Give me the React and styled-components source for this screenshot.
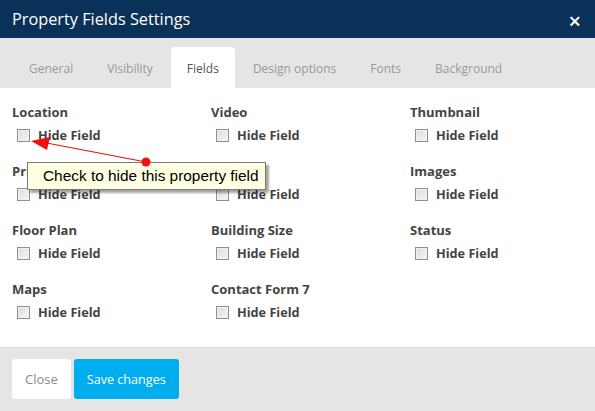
import React from "react";
import styled, { createGlobalStyle } from "styled-components";

const GlobalStyle = createGlobalStyle`
  html, body {
    margin: 0;
    padding: 0;
    background: #fff;
    font-family: "Open Sans", "Noto Sans", sans-serif;
  }
`;

const tabs = ["General", "Visibility", "Fields", "Design options", "Fonts", "Background"];

const fields = [
  "Location",
  "Video",
  "Thumbnail",
  "Price",
  "Lot Size",
  "Images",
  "Floor Plan",
  "Building Size",
  "Status",
  "Maps",
  "Contact Form 7",
];

export default function App() {
  return (
    <Modal>
      <GlobalStyle />
      <Header>
        <Title>Property Fields Settings</Title>
        <CloseX>×</CloseX>
      </Header>
      <TabBar>
        {tabs.map((t) => (
          <Tab key={t} $active={t === "Fields"}>
            {t}
          </Tab>
        ))}
      </TabBar>
      <Body>
        <FieldGrid>
          {fields.map((f) => (
            <Field key={f}>
              <FieldLabel>{f}</FieldLabel>
              <CheckRow>
                <Box />
                <span>Hide Field</span>
              </CheckRow>
            </Field>
          ))}
        </FieldGrid>
      </Body>
      <Footer>
        <Button>Close</Button>
        <Button $primary>Save changes</Button>
      </Footer>

      <Callout>Check to hide this property field</Callout>
      <Pointer width="595" height="411" viewBox="0 0 595 411">
        <line x1="146" y1="162" x2="44" y2="142.5" stroke="#ee1111" strokeWidth="1.2" />
        <polygon points="31,141 50,137 47,150" fill="#ee1111" />
        <circle cx="146" cy="162" r="4.5" fill="#ee1111" />
      </Pointer>
    </Modal>
  );
}

const Modal = styled.div`
  position: relative;
  width: 595px;
  height: 411px;
  display: flex;
  flex-direction: column;
  overflow: hidden;
`;

const Header = styled.div`
  height: 38px;
  background: #0a3157;
  display: flex;
  align-items: center;
  justify-content: space-between;
  padding: 0 14px 0 12px;
  box-sizing: border-box;
`;

const Title = styled.div`
  color: #fff;
  font-size: 16.3px;
  line-height: 20px;
`;

const CloseX = styled.div`
  color: #fff;
  font-size: 22px;
  font-weight: 600;
  line-height: 22px;
  margin-top: 2px;
`;

const TabBar = styled.div`
  height: 50px;
  background: #e5e5e5;
  display: flex;
  align-items: flex-end;
  padding-left: 13px;
  box-sizing: border-box;
`;

const Tab = styled.div`
  height: 41px;
  padding: 0 16px;
  margin-right: 2px;
  display: flex;
  align-items: center;
  font-size: 12px;
  padding-top: 2px;
  box-sizing: border-box;
  color: ${(p) => (p.$active ? "#555" : "#999")};
  background: ${(p) => (p.$active ? "#fff" : "transparent")};
  border-radius: 4px 4px 0 0;
`;

const Body = styled.div`
  height: 260px;
  padding: 15px 0 0 12px;
  box-sizing: border-box;
  border-bottom: 1px solid #dcdcdc;
`;

const FieldGrid = styled.div`
  display: grid;
  grid-template-columns: repeat(3, 199px);
  row-gap: 5px;
`;

const Field = styled.div`
  display: flex;
  flex-direction: column;
  height: 54px;
`;

const FieldLabel = styled.div`
  font-size: 13px;
  font-weight: 700;
  color: #444;
  line-height: 18px;
`;

const CheckRow = styled.label`
  display: flex;
  align-items: center;
  gap: 8px;
  margin-top: 5px;
  padding-left: 5px;
  font-size: 12.7px;
  font-weight: 700;
  color: #444;
  line-height: 18px;
`;

const Box = styled.span`
  width: 11px;
  height: 11px;
  border: 1px solid #8e8f8f;
  background: linear-gradient(135deg, #dcdcdc, #f6f6f6);
  box-shadow: inset 0 0 0 1px #f2f2f2;
`;

const Footer = styled.div`
  flex: 1;
  background: #e5e5e5;
  display: flex;
  align-items: flex-start;
  gap: 3px;
  padding: 11px 12px 0;
  box-sizing: border-box;
`;

const Button = styled.div`
  height: 40px;
  display: flex;
  align-items: center;
  padding: 0 13px;
  border-radius: 3px;
  font-size: ${(p) => (p.$primary ? "12.6px" : "13px")};
  color: ${(p) => (p.$primary ? "#fff" : "#8a8a8a")};
  background: ${(p) => (p.$primary ? "#00aeef" : "#fff")};
`;

const Callout = styled.div`
  position: absolute;
  left: 27px;
  top: 162px;
  width: 239px;
  height: 28px;
  box-sizing: border-box;
  background: #ffffe1;
  border: 1px solid #7a7a7a;
  box-shadow: 3px 3px 2px rgba(0, 0, 0, 0.35);
  font-family: "Liberation Sans", Arial, sans-serif;
  font-size: 15.4px;
  color: #000;
  display: flex;
  align-items: center;
  padding-left: 15px;
  white-space: nowrap;
`;

const Pointer = styled.svg`
  position: absolute;
  left: 0;
  top: 0;
  pointer-events: none;
`;
